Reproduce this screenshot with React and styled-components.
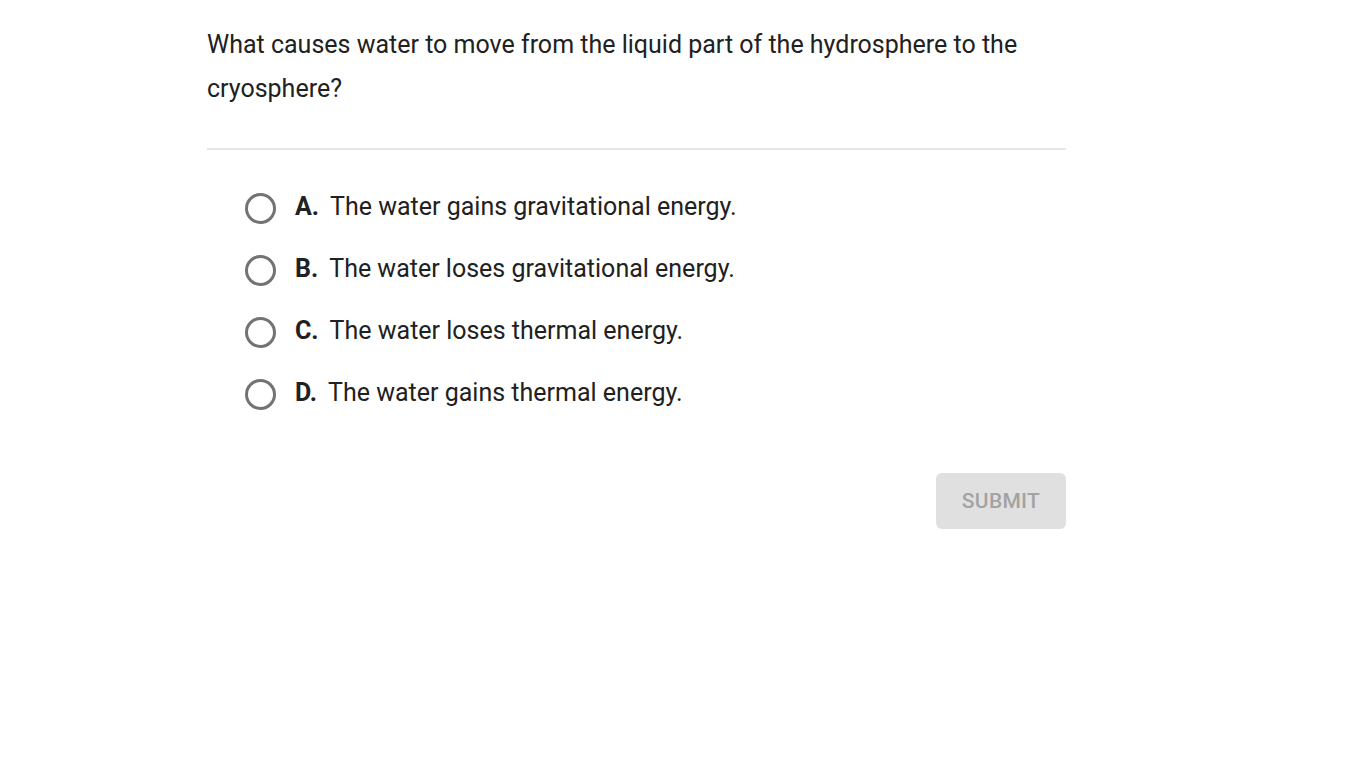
import React from "react";
import styled, { createGlobalStyle } from "styled-components";

const Global = createGlobalStyle`
  html, body { margin: 0; padding: 0; background: #fff; }
  body { font-family: Roboto, "Liberation Sans", sans-serif; color: #212121; }
`;

const Page = styled.div`
  padding: 23px 0 0 207px;
`;

const Card = styled.div`
  width: 859px;
`;

const Question = styled.p`
  margin: 0;
  font-size: 25px;
  line-height: 44px;
  color: #212121;
`;

const Divider = styled.hr`
  margin: 37px 0 0;
  border: none;
  height: 2px;
  background: #e6e6e6;
`;

const Options = styled.ul`
  list-style: none;
  margin: 25px 0 0;
  padding: 0 0 0 38px;
`;

const Option = styled.li`
  display: flex;
  align-items: center;
  height: 62px;
  cursor: pointer;
`;

const Radio = styled.span`
  box-sizing: border-box;
  width: 31px;
  height: 31px;
  border: 3px solid #737373;
  border-radius: 50%;
  flex: none;
  margin-top: 4px;
`;

const Letter = styled.span`
  font-weight: 700;
  font-size: 25px;
  margin-left: 19px;
  margin-right: 11px;
  color: #212121;
`;

const Text = styled.span`
  font-size: 25px;
  color: #212121;
`;

const Footer = styled.div`
  display: flex;
  justify-content: flex-end;
  margin-top: 50px;
`;

const Submit = styled.button`
  width: 130px;
  height: 56px;
  border: none;
  border-radius: 6px;
  background: #e0e0e0;
  color: #a3a3a3;
  font-family: Roboto, "Liberation Sans", sans-serif;
  font-weight: 500;
  font-size: 21px;
  letter-spacing: 0.3px;
`;

const options = [
  ["A.", "The water gains gravitational energy."],
  ["B.", "The water loses gravitational energy."],
  ["C.", "The water loses thermal energy."],
  ["D.", "The water gains thermal energy."],
];

export default function App() {
  return (
    <>
      <Global />
      <Page>
        <Card>
          <Question>
            What causes water to move from the liquid part of the hydrosphere to the cryosphere?
          </Question>
          <Divider />
          <Options>
            {options.map(([l, t]) => (
              <Option key={l}>
                <Radio />
                <Letter>{l}</Letter>
                <Text>{t}</Text>
              </Option>
            ))}
          </Options>
          <Footer>
            <Submit disabled>SUBMIT</Submit>
          </Footer>
        </Card>
      </Page>
    </>
  );
}
